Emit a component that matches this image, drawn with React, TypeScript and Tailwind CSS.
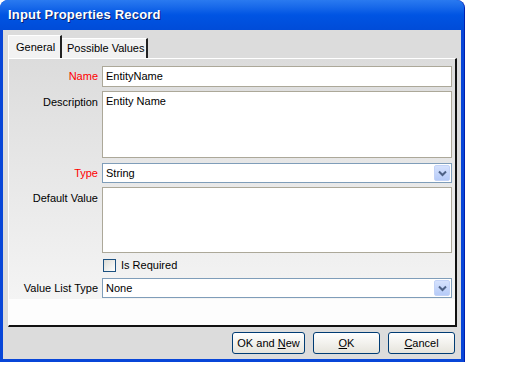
const font = { fontFamily: '"Liberation Sans", Arial, sans-serif' };

function DropButton() {
  return (
    <div className="w-[16px] h-[16px] rounded-[2px] bg-linear-to-b from-[#d6e2fd] to-[#b6cbf8] border border-[#c3d3f7] flex items-center justify-center">
      <svg width="9" height="7" viewBox="0 0 9 7">
        <path d="M1 1.5 L4.5 5 L8 1.5" fill="none" stroke="#4d6185" strokeWidth="2" />
      </svg>
    </div>
  );
}

function Label({ text, red, top }: { text: string; red?: boolean; top?: boolean }) {
  return (
    <div
      className={`pr-[3px] text-right text-[11px] ${top ? 'pt-[3px]' : 'self-center'} ${
        red ? 'text-[#ff0000]' : 'text-black'
      }`}
    >
      {text}
    </div>
  );
}

function Btn({ w, pre, u, post }: { w: string; pre: string; u: string; post: string }) {
  return (
    <button
      className={`${w} h-[22px] rounded-[3px] border border-[#003c74] bg-linear-to-b from-white to-[#e6e4dc] text-[11px] text-black whitespace-nowrap`}
    >
      {pre}
      <span className="underline">{u}</span>
      {post}
    </button>
  );
}

export default function App() {
  return (
    <div className="w-[528px] h-[376px] bg-white" style={font}>
      <div className="w-[465px] h-[362px] rounded-t-[8px] bg-[#0846d8] flex flex-col border-r border-[#0020b0]">
        <div className="h-[30px] shrink-0 rounded-t-[8px] bg-linear-to-b from-[#2a7af0] via-[#0054e3] to-[#004cd8] flex items-center pl-[8px]">
          <span
            className="text-white font-bold text-[13px] tracking-[0.2px]"
            style={{ textShadow: '1px 1px 0 #0a1e6a' }}
          >
            Input Properties Record
          </span>
        </div>
        <div className="flex-1 mx-[3px] mb-[3px] bg-[#dcdcdc] flex flex-col pt-[5px] pl-[5px] pr-[4px]">
          <div className="flex items-end h-[23px]">
            <div className="h-[23px] w-[54px] bg-[#f2f2f2] border-t border-l border-white border-r-2 border-r-[#222] text-[11px] flex items-center pl-[7px] relative z-10">
              General
            </div>
            <div className="h-[20px] w-[86px] bg-[#f2f2f2] border-t border-white border-r-2 border-r-[#222] text-[11px] flex items-center pl-[5px]">
              Possible Values
            </div>
          </div>
          <div className="h-[269px] border-t border-l border-white border-r-2 border-b-2 border-r-[#111] border-b-[#111] bg-[#fdfdfd] flex flex-col">
            <div className="bg-linear-to-b from-[#dcdcdc] to-[#f4f4f4] pt-[7px] pb-[1px] pr-[3px] grid grid-cols-[92px_1fr] gap-x-[1px]">
              <Label text="Name" red />
              <div className="h-[21px] border border-[#aca899] bg-white text-[11px] flex items-center pl-[3px]">
                EntityName
              </div>
              <div className="col-span-2 h-[4px]" />
              <Label text="Description" top />
              <div className="h-[67px] border border-[#aca899] bg-white text-[11px] pl-[3px] pt-[1px]">
                Entity Name
              </div>
              <div className="col-span-2 h-[5px]" />
              <Label text="Type" red />
              <div className="h-[20px] border border-[#7f9db9] bg-white text-[11px] flex items-center justify-between pl-[3px] pr-[1px]">
                String
                <DropButton />
              </div>
              <div className="col-span-2 h-[4px]" />
              <Label text="Default Value" top />
              <div className="h-[66px] border border-[#aca899] bg-white" />
              <div className="col-span-2 h-[5px]" />
              <div />
              <div className="h-[14px] flex items-center gap-[5px] pl-[1px] text-[11px]">
                <div className="w-[13px] h-[13px] border border-[#1c5180] bg-linear-to-br from-[#dcdcd6] to-white" />
                Is Required
              </div>
              <div className="col-span-2 h-[6px]" />
              <Label text="Value List Type" />
              <div className="h-[20px] border border-[#7f9db9] bg-white text-[11px] flex items-center justify-between pl-[3px] pr-[1px]">
                None
                <DropButton />
              </div>
            </div>
          </div>
          <div className="flex-1 flex items-center justify-end gap-[8px] pr-[2px]">
            <Btn w="w-[73px]" pre="OK and " u="N" post="ew" />
            <Btn w="w-[67px]" pre="" u="O" post="K" />
            <Btn w="w-[67px]" pre="" u="C" post="ancel" />
          </div>
        </div>
      </div>
    </div>
  );
}
